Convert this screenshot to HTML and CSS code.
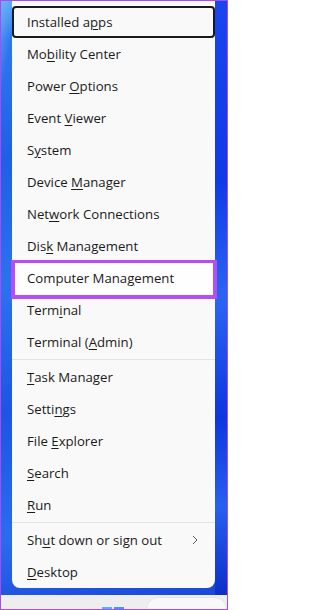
FILE: index.html
```html
<!DOCTYPE html>
<html lang="en">
<head>
<meta charset="utf-8">
<title>Quick Link menu</title>
<link rel="stylesheet" href="styles.css">
</head>
<body>
<div class="screen">
  <div class="wall">
    <nav class="menu">
      <ul class="group">
        <li class="item focus"><span>Installed a<u>p</u>ps</span></li>
        <li class="item"><span>Mo<u>b</u>ility Center</span></li>
        <li class="item"><span>Power <u>O</u>ptions</span></li>
        <li class="item"><span>Event <u>V</u>iewer</span></li>
        <li class="item"><span>S<u>y</u>stem</span></li>
        <li class="item"><span>Device <u>M</u>anager</span></li>
        <li class="item"><span>Net<u>w</u>ork Connections</span></li>
        <li class="item"><span>Dis<u>k</u> Management</span></li>
        <li class="item picked"><span>Computer Mana<u>g</u>ement</span></li>
        <li class="item"><span>Term<u>i</u>nal</span></li>
        <li class="item"><span>Terminal (<u>A</u>dmin)</span></li>
      </ul>
      <div class="sep"></div>
      <ul class="group">
        <li class="item"><span><u>T</u>ask Manager</span></li>
        <li class="item"><span>Setti<u>n</u>gs</span></li>
        <li class="item"><span>File <u>E</u>xplorer</span></li>
        <li class="item"><span><u>S</u>earch</span></li>
        <li class="item"><span><u>R</u>un</span></li>
      </ul>
      <div class="sep"></div>
      <ul class="group">
        <li class="item"><span>Sh<u>u</u>t down or sign out</span>
          <svg class="chev" width="6" height="10" viewBox="0 0 6 10"><path d="M1 1 L5 5 L1 9" fill="none" stroke="#5c5c5c" stroke-width="1"/></svg>
        </li>
        <li class="item"><span><u>D</u>esktop</span></li>
      </ul>
    </nav>
  </div>
  <div class="taskbar">
    <div class="logo"><span class="tile a"></span><span class="tile b"></span></div>
    <div class="searchbox"></div>
  </div>
</div>
</body>
</html>
```

FILE: styles.css
```css
html, body {
  margin: 0;
  padding: 0;
}

body {
  width: 228px;
  height: 610px;
  overflow: hidden;
  font-family: "Open Sans", "Noto Sans", sans-serif;
}

.screen {
  box-sizing: border-box;
  width: 228px;
  height: 610px;
  border: 1px solid #ac4af2;
  display: flex;
  flex-direction: column;
  overflow: hidden;
}

.wall {
  flex: 1;
  display: flex;
  align-items: flex-start;
  background:
    linear-gradient(100deg, rgba(120,190,255,0.55) 0%, rgba(120,190,255,0) 5%),
    linear-gradient(170deg, #5aa6f4 0%, #2f78ee 6%, #1f5fe6 25%, #2b72ef 45%, #1c55e4 65%, #2a6cf0 85%, #1a47d6 100%);
  background-color: #1f5ce8;
  position: relative;
}

.wall::after {
  content: "";
  position: absolute;
  right: 0;
  top: 0;
  bottom: 0;
  width: 12px;
  background: linear-gradient(175deg, #1a46ee 0%, #0f3ae6 30%, #2a66f2 50%, #0e36de 70%, #2760ee 85%, #0c2fc8 100%);
}

.menu {
  margin-left: 11px;
  width: 203px;
  box-sizing: border-box;
  padding-top: 5px;
  background: #f9f9f9;
  border-radius: 0 0 8px 8px;
  position: relative;
  z-index: 1;
}

.group {
  list-style: none;
  margin: 0;
  padding: 0;
}

.item {
  height: 32px;
  box-sizing: border-box;
  display: flex;
  align-items: center;
  padding-left: 15px;
  padding-right: 17px;
  font-size: 13.2px;
  color: #1b1b1b;
  white-space: nowrap;
}

.item u {
  text-decoration: underline;
  text-decoration-thickness: 1px;
  text-underline-offset: 2px;
}

.focus {
  border: 2px solid #1a1a1a;
  border-radius: 4px;
  padding-left: 13px;
}

.picked {
  position: relative;
  background: #fefefe;
}

.picked::after {
  content: "";
  position: absolute;
  top: -2px;
  left: -1px;
  right: -2px;
  bottom: -5px;
  border: 4px solid #b44ef5;
  border-top-width: 3px;
  pointer-events: none;
}

.chev {
  margin-left: auto;
}

.sep {
  height: 1px;
  margin: 1px 0;
  background: #e3e3e3;
}

.taskbar {
  height: 14px;
  flex: none;
  background: #eeeeee;
  display: flex;
  overflow: hidden;
  position: relative;
}

.logo {
  display: flex;
  gap: 2px;
  margin-left: 101px;
  margin-top: 12px;
}

.tile {
  width: 10px;
  height: 10px;
}

.tile.a { background: #4fb6f6; }
.tile.b { background: #3a9cf0; }

.searchbox {
  margin-left: 22px;
  margin-top: 2px;
  width: 120px;
  height: 24px;
  box-sizing: border-box;
  background: #f8f8f8;
  border: 1px solid #e4e4e4;
  border-radius: 12px;
}
```
